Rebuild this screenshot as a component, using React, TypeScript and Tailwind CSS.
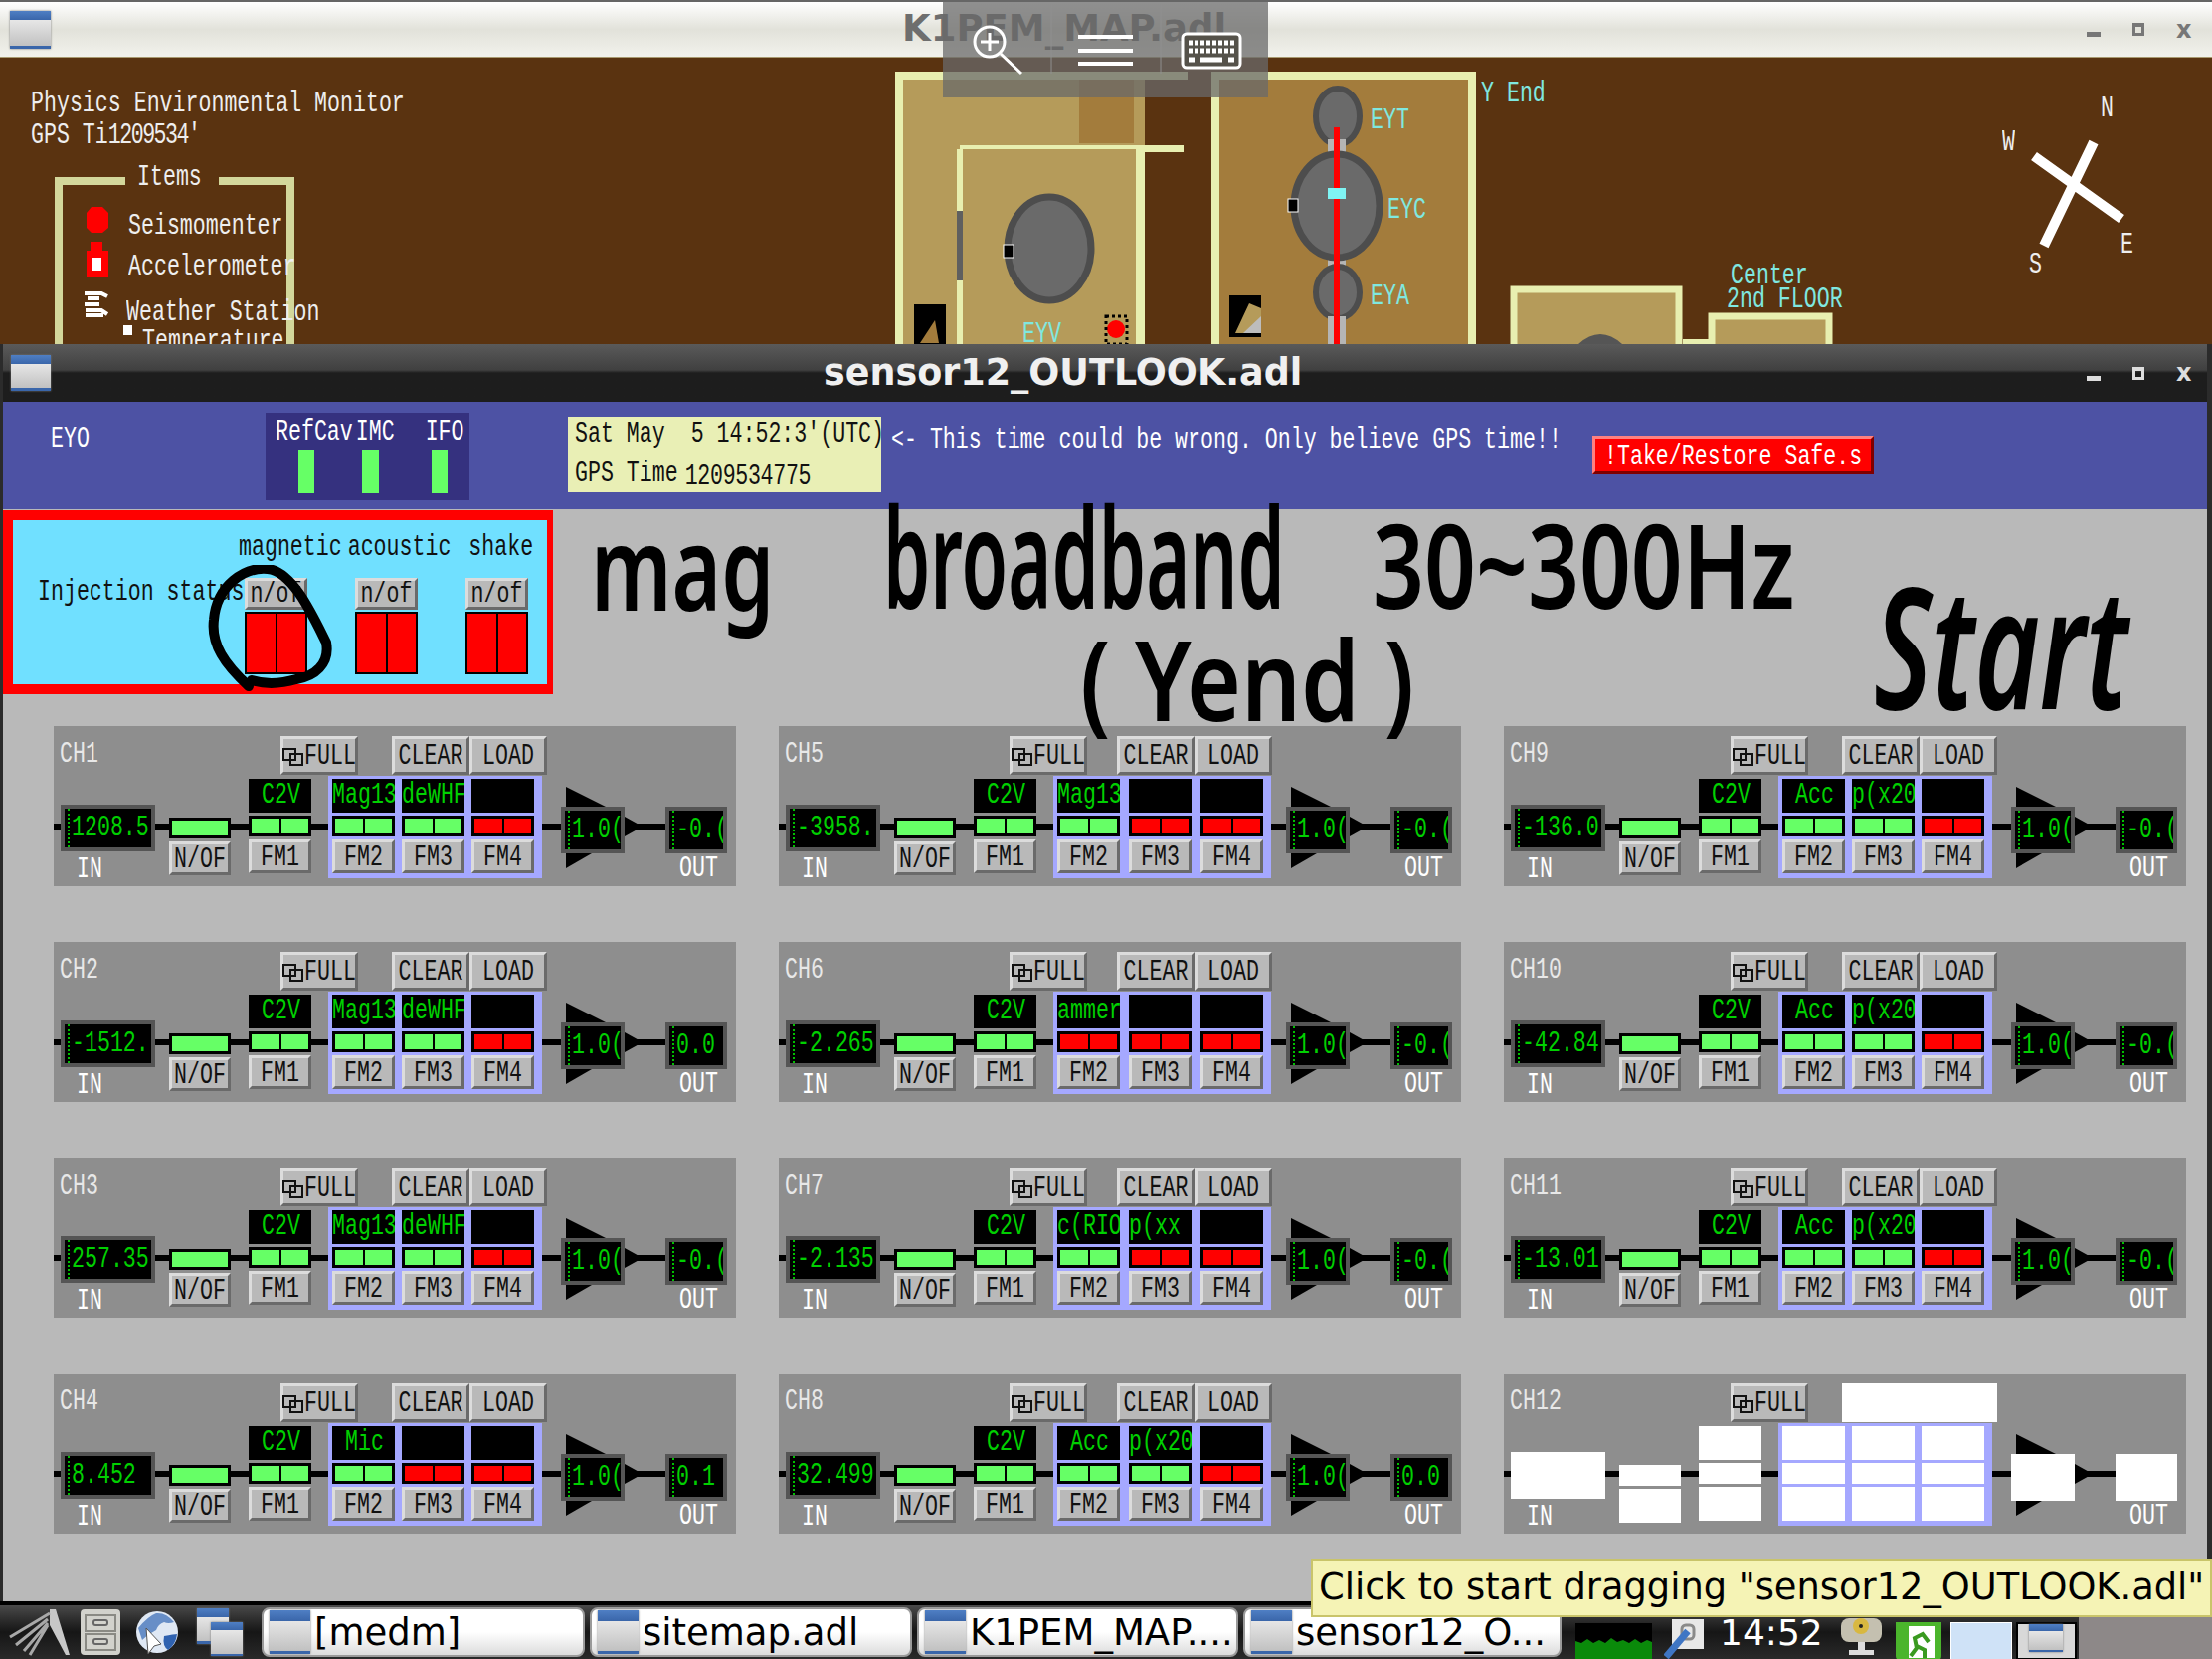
import type { ReactNode } from "react";
import clsx from "clsx";

// Bitmap-looking X font of MEDM: narrow mono stretched vertically
function Px({ children, className }: { children: ReactNode; className?: string }) {
  return (
    <span
      className={clsx(
        "inline-block whitespace-pre font-['Liberation_Mono',monospace] text-[21.6px] leading-none scale-y-[1.35]",
        className,
      )}
    >
      {children}
    </span>
  );
}

function WinIcon({ className }: { className?: string }) {
  return (
    <div className={clsx("flex flex-col shrink-0 bg-gradient-to-b from-[#f4f4f4] to-[#bdbdbd] shadow-[0_0_2px_#777]", className)}>
      <div className="h-[24%] bg-gradient-to-b from-[#4f7fc4] to-[#3a66aa]" />
      <div className="flex-1" />
      <div className="h-[7%] bg-[#3a66aa]" />
    </div>
  );
}

function WinButtons({ color, className }: { color: string; className?: string }) {
  return (
    <div className={clsx("flex items-center gap-[32px] ml-auto", color, className)}>
      <div className="w-[14px] h-[5px] mt-[10px] bg-current" />
      <div className="w-[12px] h-[13px] border-[3px] border-t-[4px] border-current" />
      <div className="text-[24px] leading-none font-bold font-['DejaVu_Sans',sans-serif] w-[15px]">x</div>
    </div>
  );
}

type Fm = { label: string; on: boolean };
type Channel = { name: string; input: string; out: string; fm: [Fm, Fm, Fm]; blank?: boolean; wide?: boolean };

const off: Fm = { label: "", on: false };
const acc: Fm = { label: " Acc", on: true };
const px20: Fm = { label: "p(x20", on: true };
const mag: Fm = { label: "Mag13", on: true };
const whf: Fm = { label: "deWHF", on: true };

const channels: Channel[] = [
  { name: "CH1", input: "1208.5", out: "-0.(", fm: [mag, whf, off] },
  { name: "CH2", input: "-1512.", out: "0.0", fm: [mag, whf, off] },
  { name: "CH3", input: "257.35", out: "-0.(", fm: [mag, whf, off] },
  { name: "CH4", input: "8.452", out: "0.1", fm: [{ label: " Mic", on: true }, off, off] },
  { name: "CH5", input: "-3958.", out: "-0.(", fm: [mag, off, off], wide: true },
  { name: "CH6", input: "-2.265", out: "-0.(", fm: [{ label: "ammer", on: false }, off, off], wide: true },
  { name: "CH7", input: "-2.135", out: "-0.(", fm: [{ label: "c(RIO", on: true }, { label: "p(xx", on: false }, off], wide: true },
  { name: "CH8", input: "32.499", out: "0.0", fm: [acc, px20, off], wide: true },
  { name: "CH9", input: "-136.0", out: "-0.(", fm: [acc, px20, off] },
  { name: "CH10", input: "-42.84", out: "-0.(", fm: [acc, px20, off] },
  { name: "CH11", input: "-13.01", out: "-0.(", fm: [acc, px20, off] },
  { name: "CH12", input: "", out: "", fm: [off, off, off], blank: true },
];

function Btn({ label, blank, className }: { label: string; blank?: boolean; className?: string }) {
  if (blank) return <div className={clsx("bg-white", className)} />;
  return (
    <div
      className={clsx(
        "flex items-center justify-center pt-[3px] overflow-hidden bg-[#b9b9b9] border-[3px] border-t-[#dcdcdc] border-l-[#dcdcdc] border-r-[#6a6a6a] border-b-[#6a6a6a] text-[#111]",
        className,
      )}
    >
      <Px>{label}</Px>
    </div>
  );
}

function Readout({ text, blank, marker, className }: { text: string; blank?: boolean; marker?: boolean; className?: string }) {
  if (blank) return <div className={clsx("bg-white", className)} />;
  return (
    <div className={clsx("flex items-center overflow-hidden bg-black text-[#00d000]", className)}>
      {marker && <div className="h-full w-[3px] ml-[3px] mr-[1px] shrink-0 border-l-2 border-dotted border-[#00c000]" />}
      <Px>{text}</Px>
    </div>
  );
}

function Pair({ on, blank }: { on: boolean; blank?: boolean }) {
  if (blank) return <div className="h-[21px] bg-white" />;
  const cell = on ? "bg-[#66ff66]" : "bg-[#ff0000]";
  return (
    <div className="flex gap-[2px] h-[21px] border-[3px] border-black bg-black">
      <div className={clsx("flex-1", cell)} />
      <div className={clsx("flex-1", cell)} />
    </div>
  );
}

function FmCol({ fm, name, blank }: { fm: Fm; name: string; blank?: boolean }) {
  return (
    <div className="flex flex-col w-[63px] gap-[3px]">
      <Readout text={fm.label} blank={blank} className="h-[34px]" />
      <Pair on={fm.on} blank={blank} />
      <Btn label={name} blank={blank} className="h-[34px]" />
    </div>
  );
}

function Tri({ w, h, className, flip }: { w: number; h: number; className?: string; flip?: boolean }) {
  return (
    <svg width={w} height={h} viewBox={`0 0 ${w} ${h}`} className={clsx("block shrink-0", className)}>
      <polygon points={flip ? `0,0 ${w},0 0,${h}` : `0,0 ${w},${h} 0,${h}`} fill="#000" />
    </svg>
  );
}

function FullBtn({ className }: { className?: string }) {
  return (
    <div className={clsx("flex items-center justify-center w-[78px] h-[39px] pt-[3px] bg-[#b9b9b9] border-[3px] border-t-[#dcdcdc] border-l-[#dcdcdc] border-r-[#6a6a6a] border-b-[#6a6a6a] text-[#111]", className)}>
      <svg width="22" height="20" viewBox="0 0 22 20" className="shrink-0">
        <rect x="1" y="2" width="12" height="11" fill="none" stroke="#111" strokeWidth="2" />
        <rect x="8" y="7" width="12" height="11" fill="none" stroke="#111" strokeWidth="2" />
      </svg>
      <Px>FULL</Px>
    </div>
  );
}

function ChannelPanel({ ch }: { ch: Channel }) {
  const blank = ch.blank;
  const frame = "border-[4px] border-[#555]";
  return (
    <div className="flex flex-col h-[161px] bg-[#8e8e8e]">
      <div className="flex items-start h-[50px] pt-[10px]">
        <div className={clsx("pl-[6px] pt-[6px] text-[#e8e8e8]", ch.wide ? "w-[232px]" : "w-[228px]")}>
          <Px>{ch.name}</Px>
        </div>
        <FullBtn />
        {blank ? (
          <div className="w-[156px] h-[39px] ml-[34px] bg-white" />
        ) : (
          <div className={clsx("flex", ch.wide ? "ml-[30px]" : "ml-[34px]")}>
            <Btn label="CLEAR" className="w-[78px] h-[39px]" />
            <Btn label="LOAD" className="w-[78px] h-[39px]" />
          </div>
        )}
      </div>

      <div className="relative flex items-start flex-1">
        {/* signal line behind the chain */}
        <div className="absolute left-0 top-[48px] w-[620px] h-[6px] bg-black" />

        <div className="relative flex flex-col ml-[7px] w-[95px] pt-[29px]">
          <Readout text={ch.input} blank={blank} marker className={clsx("h-[47px]", !blank && frame)} />
          <div className="pl-[16px] pt-[6px] text-white">
            <Px>IN</Px>
          </div>
        </div>

        <div className="relative flex flex-col ml-[14px] w-[62px] pt-[42px] gap-[3px]">
          {blank ? (
            <div className="h-[21px] bg-white" />
          ) : (
            <div className="h-[21px] border-[3px] border-black bg-[#66ff66]" />
          )}
          <Btn label="N/OF" blank={blank} className="h-[34px]" />
        </div>

        <div className="relative ml-[18px] pt-[3px]">
          <FmCol fm={{ label: " C2V", on: true }} name="FM1" blank={blank} />
        </div>

        <div className={clsx("relative flex ml-[17px] h-[103px] px-[4px] pt-[3px] bg-[#a5a8ff]", ch.wide ? "w-[219px] gap-[9px]" : "w-[215px] gap-[7px]")}>
          <FmCol fm={ch.fm[0]} name="FM2" blank={blank} />
          <FmCol fm={ch.fm[1]} name="FM3" blank={blank} />
          <FmCol fm={ch.fm[2]} name="FM4" blank={blank} />
        </div>

        <div className={clsx("relative flex flex-col w-[64px] pt-[11px]", ch.wide ? "ml-[15px]" : "ml-[19px]")}>
          <Tri w={40} h={20} className="ml-[5px]" />
          <Readout text="1.0(" blank={blank} marker className={clsx("h-[47px]", !blank && frame)} />
          <Tri w={26} h={15} className="ml-[5px]" flip />
        </div>

        <svg width="18" height="20" viewBox="0 0 18 20" className="relative block shrink-0 mt-[41px]">
          <polygon points="0,0 18,10 0,20" fill="#000" />
        </svg>

        <div className="relative flex flex-col ml-[23px] w-[62px] pt-[31px]">
          <Readout text={ch.out} blank={blank} marker className={clsx("h-[47px]", !blank && frame)} />
          <div className="pl-[14px] pt-[3px] text-white">
            <Px>OUT</Px>
          </div>
        </div>
      </div>
    </div>
  );
}

function InjectionCol() {
  return (
    <div className="flex flex-col w-[63px] gap-[2px]">
      <Btn label="n/of" className="h-[32px]" />
      <div className="flex h-[63px] gap-[2px] border-[2px] border-black bg-black">
        <div className="flex-1 bg-[#ff0000]" />
        <div className="flex-1 bg-[#ff0000]" />
      </div>
    </div>
  );
}

function FloorPlan() {
  return (
    <svg width="2224" height="288" viewBox="0 58 2224 288" className="absolute left-0 top-0">
      {/* legend frame */}
      <path d="M126 182 H59 V346 M220 182 H292 V346" fill="none" stroke="#d3d79b" strokeWidth="8" />
      <polygon points="92,208 103,208 109,214 109,229 103,234 92,234 87,229 87,214" fill="#ff0000" />
      <rect x="91" y="243" width="12" height="10" fill="#ff0000" />
      <rect x="87" y="252" width="22" height="26" fill="#ff0000" />
      <rect x="93" y="259" width="9" height="13" fill="#fff" />
      <path d="M85 295 H102 L108 298 M88 300 H100 M85 306 H100 M86 312 H102 L108 316 M86 317 H104" stroke="#fff" strokeWidth="4" fill="none" />
      <polygon points="124,327 133,327 133,337 124,337" fill="#fff" />

      {/* left building */}
      <rect x="904" y="76" width="286" height="280" fill="#b59b5a" stroke="#e8efb0" strokeWidth="8" />
      <rect x="1085" y="80" width="55" height="64" fill="#a37c3c" />
      <rect x="1151" y="80" width="45" height="270" fill="#5a3310" />
      <rect x="1140" y="68" width="80" height="4" fill="#5a3310" />
      <rect x="965" y="146" width="225" height="7" fill="#e8efb0" />
      <rect x="1190" y="143" width="10" height="7" fill="#5a3310" />
      <rect x="962" y="150" width="6" height="200" fill="#e8efb0" />
      <rect x="968" y="150" width="174" height="200" fill="#b59b5a" />
      <rect x="1142" y="150" width="9" height="200" fill="#e8efb0" />
      <rect x="962" y="212" width="6" height="70" fill="#5f5f5f" />
      <ellipse cx="1055" cy="250" rx="42" ry="52" fill="#6a6a6a" stroke="#4d4d4d" strokeWidth="7" />
      <rect x="1009" y="246" width="10" height="13" fill="#000" stroke="#fff" strokeWidth="1" />
      <rect x="919" y="306" width="32" height="40" fill="#000" />
      <polygon points="925,345 940,322 944,345" fill="#a37c3c" />
      <circle cx="1122" cy="331" r="9" fill="#ff0000" />
      <rect x="1112" y="318" width="21" height="28" fill="none" stroke="#000" strokeWidth="3" strokeDasharray="3 3" />

      {/* Y end building */}
      <path d="M1222 350 V76 H1480 V350" fill="#a37c3c" stroke="#e8efb0" strokeWidth="8" />
      <ellipse cx="1345" cy="117" rx="22" ry="28" fill="#6a6a6a" stroke="#4d4d4d" strokeWidth="6" />
      <rect x="1335" y="140" width="18" height="210" fill="#b5b5b5" />
      <ellipse cx="1344" cy="207" rx="43" ry="52" fill="#6a6a6a" stroke="#4d4d4d" strokeWidth="7" />
      <ellipse cx="1345" cy="294" rx="22" ry="26" fill="#6a6a6a" stroke="#4d4d4d" strokeWidth="6" />
      <rect x="1335" y="318" width="18" height="32" fill="#b5b5b5" />
      <rect x="1341" y="128" width="6" height="220" fill="#ff0000" />
      <rect x="1335" y="189" width="18" height="11" fill="#7ff4f4" />
      <rect x="1295" y="200" width="10" height="13" fill="#000" stroke="#fff" strokeWidth="1" />
      <rect x="1236" y="297" width="32" height="42" fill="#000" />
      <polygon points="1242,335 1256,305 1268,310 1268,335" fill="#b59b5a" />
      <polygon points="1250,335 1268,318 1268,335" fill="#bdbdbd" />

      {/* center */}
      <rect x="1522" y="291" width="166" height="60" fill="#b59b5a" stroke="#e8efb0" strokeWidth="7" />
      <path d="M1587 346 Q1609 326 1631 346 Z" fill="#555" />
      <rect x="1692" y="341" width="26" height="5" fill="#e8efb0" />
      <rect x="1721" y="318" width="118" height="40" fill="#b59b5a" stroke="#e8efb0" strokeWidth="7" />

      {/* compass */}
      <path d="M2105 143 L2055 247 M2045 157 L2133 220" stroke="#fff" strokeWidth="10" fill="none" />
    </svg>
  );
}

function TopWindow() {
  const cyan = "absolute text-[#7fe8e0]";
  return (
    <div className="relative flex flex-col h-[346px] border-t-2 border-[#666] overflow-hidden">
      <div className="flex items-center h-[56px] pl-[10px] bg-gradient-to-b from-white via-[#e2e2da] to-[#f2f2ec] border-b border-[#a89a70]">
        <WinIcon className="w-[41px] h-[38px]" />
        <div className="ml-[856px] mb-[3px] text-[37px] leading-none font-bold text-[#6e6e6e] font-['DejaVu_Sans',sans-serif]">K1PEM_MAP.adl</div>
        <WinButtons color="text-[#777]" className="mr-[21px]" />
      </div>
      <div className="relative flex-1 bg-[#5a3310] overflow-hidden">
        <FloorPlan />
        <Px className="absolute left-[31px] top-[36px] text-[#eee]">Physics Environmental Monitor</Px>
        <Px className="absolute left-[31px] top-[68px] text-[#eee]">GPS Ti<span className="tracking-[-1.5px]">1209534'</span></Px>
        <Px className="absolute left-[138px] top-[110px] text-[#eee]">Items</Px>
        <Px className="absolute left-[129px] top-[159px] text-[#eee]">Seismomenter</Px>
        <Px className="absolute left-[129px] top-[200px] text-[#eee]">Accelerometer</Px>
        <Px className="absolute left-[127px] top-[246px] text-[#eee]">Weather Station</Px>
        <Px className="absolute left-[143px] top-[275px] text-[#eee]">Temperature</Px>
        <Px className={clsx(cyan, "left-[1028px] top-[268px]")}>EYV</Px>
        <Px className={clsx(cyan, "left-[1378px] top-[53px]")}>EYT</Px>
        <Px className={clsx(cyan, "left-[1395px] top-[143px]")}>EYC</Px>
        <Px className={clsx(cyan, "left-[1378px] top-[230px]")}>EYA</Px>
        <Px className={clsx(cyan, "left-[1489px] top-[26px]")}>Y End</Px>
        <Px className={clsx(cyan, "left-[1740px] top-[209px]")}>Center</Px>
        <Px className={clsx(cyan, "left-[1736px] top-[233px]")}>2nd FLOOR</Px>
        <Px className="absolute left-[2112px] top-[41px] text-[#eee]">N</Px>
        <Px className="absolute left-[2013px] top-[75px] text-[#eee]">W</Px>
        <Px className="absolute left-[2132px] top-[178px] text-[#eee]">E</Px>
        <Px className="absolute left-[2040px] top-[198px] text-[#eee]">S</Px>
      </div>

      {/* remote desktop toolbar */}
      <svg width="327" height="96" viewBox="0 0 327 96" className="absolute left-[948px] top-0">
        <rect width="327" height="96" fill="#6a6a6a" fillOpacity="0.75" />
        <circle cx="47" cy="40" r="15" fill="none" stroke="#fff" strokeWidth="3" />
        <path d="M47 31 V49 M38 40 H56 M58 52 L79 72" stroke="#fff" strokeWidth="3" fill="none" />
        <path d="M109 0 V72 M219 0 V72" stroke="#8f8f8f" strokeWidth="1" />
        <path d="M136 35 H191 M136 49 H191 M136 62 H191" stroke="#fff" strokeWidth="4" />
        <rect x="241" y="32" width="58" height="34" rx="4" fill="#55524a" stroke="#fff" strokeWidth="3" />
        <path d="M247 41 H293 M247 49 H293" stroke="#fff" strokeWidth="5" strokeDasharray="4 2" />
        <path d="M247 58 H253 M259 58 H281 M287 58 H293" stroke="#fff" strokeWidth="5" />
      </svg>
    </div>
  );
}

function OutlookWindow() {
  return (
    <div className="flex flex-col flex-1 border-l-[3px] border-r-[5px] border-[#2b2b2b]">
      <div className="flex items-center h-[58px] pl-[8px] bg-gradient-to-b from-[#5a5a5a] via-[#404040] via-45% to-[#1d1d1d] to-50%">
        <WinIcon className="w-[40px] h-[36px]" />
        <div className="ml-[777px] text-[36.5px] leading-none font-bold text-[#f0f0f0] font-['DejaVu_Sans',sans-serif]">sensor12_OUTLOOK.adl</div>
        <WinButtons color="text-[#ddd]" className="mr-[16px]" />
      </div>

      <div className="flex items-start h-[108px] bg-[#4d52a4] text-white">
        <Px className="ml-[48px] mt-[27px] w-[216px]">EYO</Px>
        <div className="flex flex-col w-[205px] h-[88px] mt-[11px] bg-[#35317f]">
          <div className="flex pt-[9px] pl-[10px]">
            <Px>RefCav</Px>
            <Px className="ml-[3px]">IMC</Px>
            <Px className="ml-[31px]">IFO</Px>
          </div>
          <div className="flex pl-[33px] pt-[6px]">
            <div className="w-[16px] h-[44px] bg-[#66ff66]" />
            <div className="w-[17px] h-[44px] ml-[48px] bg-[#66ff66]" />
            <div className="w-[16px] h-[44px] ml-[53px] bg-[#66ff66]" />
          </div>
        </div>
        <div className="flex flex-col w-[315px] h-[76px] mt-[15px] ml-[99px] pl-[7px] pt-[7px] gap-[19px] overflow-hidden bg-[#e9efb5] text-[#111]">
          <Px>Sat May  5 14:52:3'(UTC)</Px>
          <div className="flex">
            <Px>GPS Time</Px>
            <div className="w-[127px] ml-[7px] overflow-hidden">
              <Px className="tracking-[-0.3px]">1209534775</Px>
            </div>
          </div>
        </div>
        <Px className="ml-[10px] mt-[28px] w-[674px]">{"<- This time could be wrong. Only believe GPS time!!"}</Px>
        <div className="flex items-center w-[283px] h-[39px] mt-[34px] ml-[31px] pl-[9px] pt-[4px] bg-[#ff0000] border-[3px] border-t-[#ff8080] border-l-[#ff8080] border-r-[#800000] border-b-[#800000]">
          <Px>!Take/Restore Safe.s</Px>
        </div>
      </div>

      <div className="flex flex-col flex-1 bg-[#b9b9b9]">
        <div className="w-[553px] h-[185px] mt-px bg-[#70e0ff] border-[#ff0000] border-l-[10px] border-r-[6px] border-y-[10px] text-[#111]">
          <div className="flex pl-[227px] pt-[17px]">
            <Px>magnetic</Px>
            <Px className="ml-[6px]">acoustic</Px>
            <Px className="ml-[18px]">shake</Px>
          </div>
          <div className="flex pl-[25px] pt-[19px]">
            <Px className="w-[208px] mt-[15px]">Injection status</Px>
            <InjectionCol />
            <div className="w-[48px]" />
            <InjectionCol />
            <div className="w-[48px]" />
            <InjectionCol />
          </div>
        </div>

        <div className="grid grid-rows-4 grid-flow-col grid-cols-[686px_686px_686px] gap-x-[43px] gap-y-[56px] pl-[51px] pt-[32px]">
          {channels.map((ch) => (
            <ChannelPanel key={ch.name} ch={ch} />
          ))}
        </div>
      </div>
    </div>
  );
}

function TaskButton({ label, className }: { label: string; className?: string }) {
  return (
    <div className={clsx("flex items-center h-[50px] px-[6px] rounded-[8px] border-2 border-[#9a9a9a] bg-gradient-to-b from-white via-white to-[#dcdcdc] text-black overflow-hidden", className)}>
      <WinIcon className="w-[41px] h-[44px]" />
      <div className="ml-[4px] text-[37px] leading-none whitespace-pre font-['DejaVu_Sans',sans-serif]">{label}</div>
    </div>
  );
}

function Taskbar() {
  return (
    <div className="flex items-center h-[58px] pl-[6px] border-t-[4px] border-black bg-gradient-to-b from-[#4a4a4a] via-[#161616] to-[#2a2a2a]">
      <svg width="64" height="50" viewBox="0 0 64 50" className="shrink-0">
        <polygon points="44,2 50,2 64,48 60,48 44,18" fill="#c8c8c8" />
        <path d="M44 6 L4 30 M42 12 L10 38 M42 16 L18 44 M42 18 L24 48" stroke="#a8a8a8" strokeWidth="3" fill="none" />
      </svg>
      <svg width="42" height="48" viewBox="0 0 42 48" className="shrink-0 ml-[10px]">
        <rect x="1" y="1" width="40" height="46" rx="4" fill="#d2d2cc" />
        <rect x="6" y="7" width="30" height="16" fill="none" stroke="#8a8a84" strokeWidth="2" />
        <rect x="6" y="26" width="30" height="16" fill="none" stroke="#8a8a84" strokeWidth="2" />
        <rect x="14" y="12" width="14" height="5" rx="2" fill="none" stroke="#666" strokeWidth="2" />
        <rect x="14" y="31" width="14" height="5" rx="2" fill="none" stroke="#666" strokeWidth="2" />
      </svg>
      <svg width="46" height="48" viewBox="0 0 46 48" className="shrink-0 ml-[13px]">
        <circle cx="23" cy="24" r="21" fill="#dfe8f4" />
        <path d="M4 20 Q14 8 22 5 Q32 4 40 14 Q34 16 30 14 Q24 16 22 22 Q14 26 8 32 Z" fill="#3f70b8" fillOpacity="0.75" />
        <path d="M30 28 Q40 26 43 26 Q42 36 34 42 Q28 38 30 28 Z" fill="#2f62b0" />
        <polygon points="12,20 14,46 20,38 27,36" fill="#fff" stroke="#555" strokeWidth="1" />
      </svg>
      <div className="relative w-[46px] h-[48px] ml-[17px] shrink-0">
        <WinIcon className="absolute left-0 top-0 w-[32px] h-[36px]" />
        <WinIcon className="absolute left-[14px] top-[14px] w-[32px] h-[34px]" />
      </div>
      <div className="flex ml-[19px] gap-[5px]">
        <TaskButton label="[medm]" className="w-[325px]" />
        <TaskButton label="sitemap.adl" className="w-[324px]" />
        <TaskButton label="K1PEM_MAP...." className="w-[323px]" />
        <TaskButton label="sensor12_O..." className="w-[320px]" />
      </div>
      <div className="relative w-[77px] h-[36px] ml-[14px] mt-[18px] bg-black overflow-hidden">
        <svg width="77" height="36" viewBox="0 0 77 36" className="absolute left-0 top-0">
          <path d="M0 36 V18 L6 20 L12 16 L18 20 L24 17 L30 20 L36 15 L42 19 L48 17 L54 20 L60 16 L66 20 L72 17 L77 19 V36 Z" fill="#0a8a0a" />
        </svg>
      </div>
      <svg width="40" height="40" viewBox="0 0 40 40" className="shrink-0 ml-[12px] mt-[14px]">
        <rect x="8" y="0" width="32" height="30" fill="#e8e8e8" />
        <rect x="18" y="6" width="12" height="14" rx="4" fill="none" stroke="#8a8a8a" strokeWidth="3" />
        <path d="M2 38 L24 12" stroke="#3f76c4" strokeWidth="7" />
      </svg>
      <div className="ml-[16px] mt-[2px] text-[36px] leading-none text-white font-['DejaVu_Sans',sans-serif]">14:52</div>
      <svg width="45" height="42" viewBox="0 0 45 42" className="shrink-0 ml-[16px] mt-[14px]">
        <rect x="2" y="0" width="41" height="24" rx="8" fill="#c4c0b0" />
        <circle cx="22" cy="8" r="8" fill="#d8b840" />
        <circle cx="22" cy="8" r="2" fill="#222" />
        <rect x="19" y="24" width="7" height="8" fill="#ddd" />
        <rect x="10" y="32" width="25" height="5" fill="#ddd" />
      </svg>
      <div className="flex items-end justify-center w-[46px] h-[38px] ml-[12px] mt-[18px] pr-[2px] rounded-b-[4px] bg-[#4bb52c]">
        <svg width="34" height="34" viewBox="0 0 34 34">
          <rect x="8" y="0" width="26" height="32" fill="#fff" />
          <path d="M10 30 L16 22 L14 12 L22 8 L28 16 M16 20 L24 24 L24 32" stroke="#3a9a20" strokeWidth="4" fill="none" />
        </svg>
      </div>
      <div className="w-[62px] h-[38px] ml-[9px] mt-[18px] bg-[#cfe2f7] border border-white" />
      <div className="flex justify-center w-[61px] h-[38px] ml-[4px] mt-[18px] bg-[#d8d8d8] border-2 border-black">
        <WinIcon className="w-[34px] h-[28px]" />
      </div>
      <div className="flex-1 self-stretch ml-[2px] bg-[#8d8888]" />
    </div>
  );
}

export default function App() {
  return (
    <div className="relative flex flex-col w-[2224px] h-[1668px] overflow-hidden bg-[#111]">
      <TopWindow />
      <OutlookWindow />
      <Taskbar />

      {/* hand annotations over the screen */}
      <svg width="136" height="130" viewBox="0 0 136 130" className="absolute left-[206px] top-[568px]">
        <path d="M44 122 C20 100 6 80 9 55 C12 20 40 2 63 4 C88 6 108 50 122 78 C126 100 110 112 92 115 C75 120 60 120 47 116" fill="none" stroke="#000" strokeWidth="10" strokeLinecap="round" />
      </svg>
      <div className="absolute left-[594px] top-[510px] text-[118px] leading-none font-semibold text-black origin-top-left scale-x-[0.72] font-['Noto_Sans',sans-serif]">mag</div>
      <div className="absolute left-[888px] top-[488px] text-[140px] leading-none font-semibold text-black origin-top-left scale-x-[0.54] font-['Noto_Sans',sans-serif]">broadband</div>
      <div className="absolute left-[1380px] top-[508px] text-[118px] leading-none font-semibold text-black origin-top-left scale-x-[0.77] font-['Noto_Sans',sans-serif]">30~300Hz</div>
      <div className="absolute left-[1086px] top-[626px] text-[112px] leading-none font-semibold text-black origin-top-left scale-x-[0.84] font-['Noto_Sans',sans-serif]">( Yend )</div>
      <div className="absolute left-[1884px] top-[562px] text-[170px] leading-none font-semibold italic text-black origin-top-left scale-x-[0.66] font-['Noto_Sans',sans-serif]">Start</div>

      {/* panel drag tooltip */}
      <div className="absolute left-[1318px] top-[1567px] flex items-center w-[906px] h-[59px] pl-[6px] bg-[#f5f3b5] border-2 border-[#c9c46a] text-[36.8px] leading-none text-black whitespace-pre font-['DejaVu_Sans',sans-serif]">
        {'Click to start dragging "sensor12_OUTLOOK.adl"'}
      </div>
    </div>
  );
}
